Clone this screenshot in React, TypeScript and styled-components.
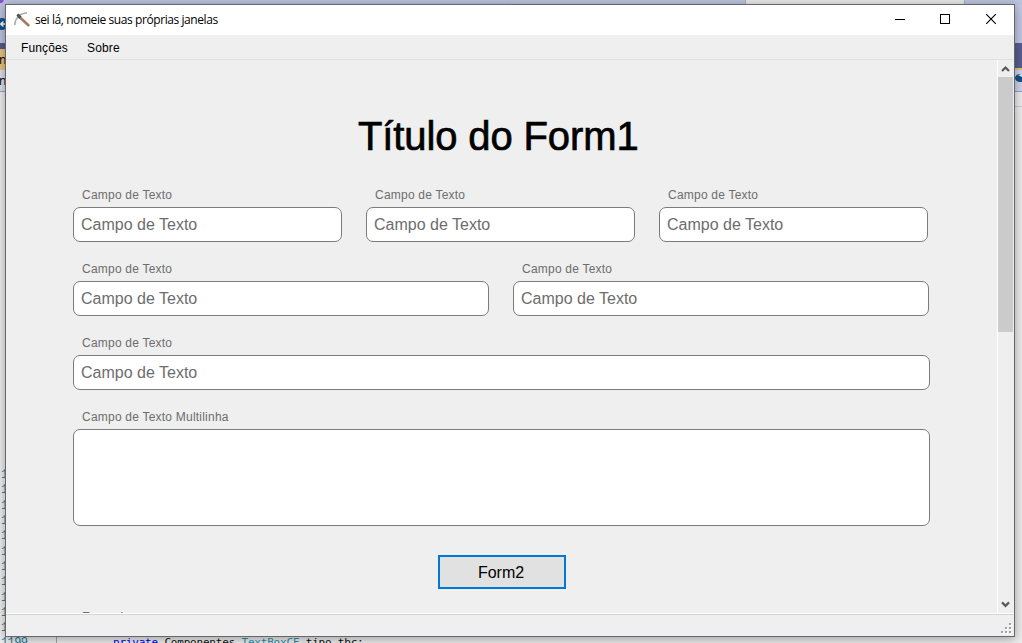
import React from "react";
import styled, { createGlobalStyle } from "styled-components";

const GlobalStyle = createGlobalStyle`
  * { box-sizing: border-box; }
  html, body { margin: 0; width: 1022px; height: 643px; overflow: hidden; }
  body { font-family: "Liberation Sans", Arial, sans-serif; color: #000; }
`;

const Desktop = styled.div`
  position: relative;
  width: 1022px;
  height: 643px;
  overflow: hidden;
  background: #ededed;
`;

const Ide = styled.div`
  display: flex;
  flex-direction: column;
  height: 643px;
`;

const IdeBar = styled.div<{ $h: number; $left: string; $right?: string }>`
  flex: none;
  height: ${(p) => p.$h}px;
  background: ${(p) => `linear-gradient(90deg, ${p.$left} 50%, ${p.$right ?? p.$left} 50%)`};
`;

const SearchBox = styled.div`
  width: 220px;
  height: 5px;
  margin-left: 745px;
  background: #e8e8e6;
  border: solid #a6aec8;
  border-width: 0 1px;
`;

const Editor = styled.div`
  flex: 1;
  display: flex;
  flex-direction: column;
  justify-content: flex-end;
  margin-bottom: -8px;
  font: 12px/15.35px "Liberation Mono", monospace;
  color: #2b7f9e;
`;

const CodeLine = styled.div`
  height: 15.35px;
  padding-left: 1px;
  white-space: pre;
  display: flex;
  &:not(:last-child) { padding-top: 1px; }
`;

const LineNumber = styled.span`
  width: 55px;
  letter-spacing: -0.6px;
`;

const Code = styled.span`
  flex: 1;
  height: 16px;
  padding-left: 56px;
  border-left: 1px solid #a5a5a5;
  color: #111;
  font: 11px/14px "DejaVu Sans Mono", monospace;
  letter-spacing: -0.2px;
  b { font-weight: 400; color: #0000ee; }
  i { font-style: normal; color: #2b91af; }
`;

const Badge = styled.svg<{ $x: number; $y: number }>`
  position: absolute;
  left: ${(p) => p.$x}px;
  top: ${(p) => p.$y}px;
`;

const IdeGlyph = styled.span<{ $y: number }>`
  position: absolute;
  left: -1px;
  top: ${(p) => p.$y}px;
  font: 12px/14px "Open Sans", sans-serif;
`;

const Window = styled.main`
  position: absolute;
  left: 5px;
  top: 4px;
  width: 1010px;
  height: 633px;
  display: flex;
  flex-direction: column;
  background: #efefef;
  border: 1px solid #65676d;
  box-shadow: 0 2px 10px rgba(0, 0, 0, 0.35);
`;

const TitleBar = styled.header`
  flex: none;
  height: 30px;
  display: flex;
  align-items: center;
  background: #fff;
  padding-left: 8px;
`;

const Caption = styled.span`
  flex: 1;
  margin-left: 5px;
  font: 12px/16px "Open Sans", sans-serif;
  letter-spacing: -0.42px;
`;

const WindowButton = styled.button`
  width: 46px;
  height: 30px;
  padding: 0;
  border: 0;
  background: transparent;
  svg { display: block; }
`;

const MenuBar = styled.nav`
  flex: none;
  height: 25px;
  display: flex;
  gap: 19px;
  padding: 1px 0 0 15px;
  border-bottom: 1px solid #dfdfdf;
  font-size: 12px;
  line-height: 25px;
`;

const MenuItem = styled.span`
  letter-spacing: 0.14px;
`;

const Viewport = styled.div`
  flex: none;
  height: 553px;
  display: flex;
  overflow: hidden;
`;

const Form = styled.form`
  flex: 1;
  height: 553px;
  overflow: hidden;
  display: flex;
  flex-direction: column;
  padding: 53px 0 0 67px;
`;

const Heading = styled.h1`
  flex: none;
  margin: 0 0 27px 285px;
  height: 47px;
  font-size: 40px;
  line-height: 47px;
  font-weight: 400;
  letter-spacing: -0.12px;
  white-space: nowrap;
  -webkit-text-stroke: 0.7px #000;
`;

const Row = styled.div`
  display: flex;
  gap: 24px;
  height: 74px;
  flex: none;
`;

const Field = styled.label<{ $w: number }>`
  display: flex;
  flex-direction: column;
  width: ${(p) => p.$w}px;
`;

const Label = styled.span`
  flex: none;
  height: 20px;
  padding-left: 9px;
  font-size: 12px;
  line-height: 16px;
  color: #6d6d6d;
  letter-spacing: 0.22px;
`;

const Input = styled.input`
  width: 100%;
  height: 35px;
  padding: 0 7px;
  border: 1px solid #7b7b7b;
  border-radius: 7px;
  background: #fff;
  font: 16px "Liberation Sans", Arial, sans-serif;
  &::placeholder { color: #6d6d6d; opacity: 1; }
`;

const TextArea = styled.textarea`
  width: 100%;
  height: 97px;
  margin: 0;
  border: 1px solid #7b7b7b;
  border-radius: 7px;
  background: #fff;
  resize: none;
`;

const Submit = styled.button`
  flex: none;
  width: 128px;
  height: 34px;
  margin: 29px 0 20px 365px;
  padding: 2px 2px 0 0;
  border: 2px solid #0078d7;
  background: #e1e1e1;
  color: #000;
  font: 16px "Liberation Sans", Arial, sans-serif;
`;

const ScrollBar = styled.div`
  flex: none;
  width: 17px;
  border-left: 1px solid #fff;
  display: flex;
  flex-direction: column;
  svg { display: block; flex: none; }
`;

const Thumb = styled.div`
  width: 15px;
  height: 255px;
  background: #cbcbcb;
`;

const Spacer = styled.div`
  flex: 1;
`;

const StatusBar = styled.footer`
  flex: 1;
  display: flex;
  justify-content: flex-end;
  align-items: flex-end;
  border-top: 1px solid #fff;
  box-shadow: inset 0 1px 0 #d4d4d4;
  padding: 0 2px 2px 0;
  svg { display: block; }
`;

const Pickaxe = () => (
  <svg width="16" height="16" viewBox="0 0 16 16">
    <path d="M6 5.5 14.4 13.2" stroke="#a77a5f" strokeWidth="2.6" strokeLinecap="round" />
    <path d="M.7 13C.9 9.6 1.8 7 4.2 4.4 6.4 2.2 9 1.2 13 .9" fill="none" stroke="#aab0b0" strokeWidth="1.7" />
    <path d="M2.4 3.2 4.4 1.4 7.6 4.4 5.2 7Z" fill="#4b5558" />
  </svg>
);

const TextField = ({ w, text = "Campo de Texto" }: { w: number; text?: string }) => (
  <Field $w={w}>
    <Label>{text}</Label>
    <Input placeholder={text} />
  </Field>
);

const Chevron = ({ down = false }: { down?: boolean }) => (
  <svg width="15" height="17" viewBox="0 0 15 17">
    <path
      d={down ? "M4 6.4 7.5 9.9 11 6.4" : "M4 11 7.5 7.5 11 11"}
      fill="none"
      stroke="#595959"
      strokeWidth="2.2"
    />
  </svg>
);

const gripDots = [[8, 0], [4, 4], [8, 4], [0, 8], [4, 8], [8, 8]];

export default function App() {
  return (
    <>
      <GlobalStyle />
      <Desktop>
        <Ide>
          <IdeBar $h={5} $left="#b9c1dd" $right="#bcc4df"><SearchBox /></IdeBar>
          <IdeBar $h={38} $left="#bac2de" $right="#c0c8e2" />
          <IdeBar $h={6} $left="#505b88" $right="#565f8e" />
          <IdeBar $h={19} $left="#e6c27c" $right="#565f8e" />
          <IdeBar $h={2} $left="#e6c27c" />
          <IdeBar $h={21} $left="#dcdfeb" $right="#cfd5ea" />
          <IdeBar $h={1} $left="#8fa0cf" />
          <IdeBar $h={14} $left="#ededed" />
          <IdeBar $h={1} $left="#ededed" $right="#c9cbd4" />
          <Editor>
            {Array.from({ length: 11 }, (_, i) => (
              <CodeLine key={i}>{1188 + i}</CodeLine>
            ))}
            <CodeLine>
              <LineNumber>1199</LineNumber>
              <Code><b>private</b> Componentes.<i>TextBoxCF</i> tipo tbc;</Code>
            </CodeLine>
          </Editor>
        </Ide>
        <Badge width="5" height="4" $x={0} $y={0}>
          <path d="M0 0H4L2 3H0Z" fill="#8a4fd0" />
        </Badge>
        <Badge width="12" height="12" $x={-4} $y={18}>
          <circle cx="6" cy="6" r="6" fill="#10508b" />
          <path d="M4.5 6H9M4.5 6 7.5 3.5M4.5 6 7.5 8.5" stroke="#fff" fill="none" strokeWidth="1.4" />
        </Badge>
        <IdeGlyph $y={53}>n</IdeGlyph>
        <IdeGlyph $y={74}>n</IdeGlyph>
        <Badge width="8" height="10" $x={1015} $y={72}>
          <ellipse cx="5" cy="6" rx="5" ry="4" fill="#10508b" />
          <path d="M3 3 7 2V5Z" fill="#e8edf6" />
        </Badge>

        <Window>
          <TitleBar>
            <Pickaxe />
            <Caption>sei lá, nomeie suas próprias janelas</Caption>
            <WindowButton aria-label="Minimizar">
              <svg width="46" height="30"><path d="M19 14.5H29" stroke="#000" /></svg>
            </WindowButton>
            <WindowButton aria-label="Maximizar">
              <svg width="46" height="30"><rect x="18.5" y="9.5" width="9" height="9" fill="none" stroke="#000" /></svg>
            </WindowButton>
            <WindowButton aria-label="Fechar">
              <svg width="46" height="30"><path d="M18.2 9.2 27.8 18.8M27.8 9.2 18.2 18.8" stroke="#000" strokeWidth="1.1" /></svg>
            </WindowButton>
          </TitleBar>
          <MenuBar>
            <MenuItem>Funções</MenuItem>
            <MenuItem>Sobre</MenuItem>
          </MenuBar>
          <Viewport>
            <Form>
              <Heading>Título do Form1</Heading>
              <Row><TextField w={269} /><TextField w={269} /><TextField w={269} /></Row>
              <Row><TextField w={416} /><TextField w={416} /></Row>
              <Row><TextField w={857} /></Row>
              <Field $w={857}>
                <Label>Campo de Texto Multilinha</Label>
                <TextArea />
              </Field>
              <Submit type="button">Form2</Submit>
              <Label>Exemplo</Label>
            </Form>
            <ScrollBar>
              <Chevron />
              <Thumb />
              <Spacer />
              <Chevron down />
            </ScrollBar>
          </Viewport>
          <StatusBar>
            <svg width="11" height="11">
              {gripDots.map(([x, y]) => (
                <g key={`${x}-${y}`}>
                  <rect x={x + 1} y={y + 1} width="2" height="2" fill="#fff" />
                  <rect x={x} y={y} width="2" height="2" fill="#a0a0a0" />
                </g>
              ))}
            </svg>
          </StatusBar>
        </Window>
      </Desktop>
    </>
  );
}
